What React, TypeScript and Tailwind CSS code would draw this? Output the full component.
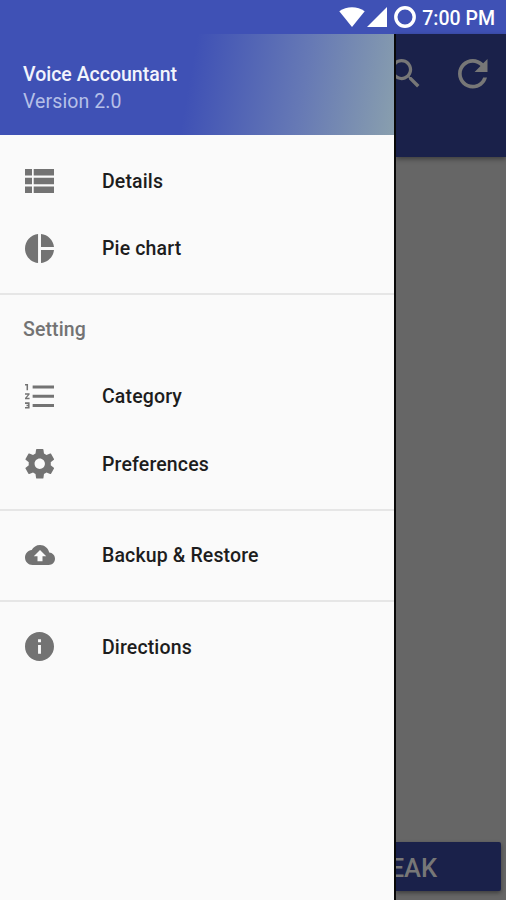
import type { ReactNode } from "react";

function Glyph({ d, viewBox, className }: { d: string; viewBox: string; className: string }) {
  return (
    <svg viewBox={viewBox} className={className} fill="currentColor" aria-hidden="true">
      <path d={d} />
    </svg>
  );
}

function Item({ icon, children }: { icon: ReactNode; children: ReactNode }) {
  return (
    <a className="flex h-[67.5px] shrink-0 items-center pl-[24.5px] text-[#737373]">
      <span className="flex w-[30px] shrink-0 justify-center">{icon}</span>
      <span className="mt-[1.5px] ml-[47.5px] text-[19.5px] leading-none font-medium tracking-[0.14px] text-[#1d1d1d]">{children}</span>
    </a>
  );
}

function Divider({ className }: { className: string }) {
  return <div className={`h-[2px] shrink-0 bg-[#e6e6e6] ${className}`} />;
}

function StatusBar() {
  return (
    <div className="flex h-[34px] shrink-0 items-center justify-end bg-[#3f51b5] pr-[11px] text-white">
      <Glyph viewBox="0 0 26 20" className="mr-[2px] h-5 w-[26px]" d="M13 20 L0.3 4.2 C7.5-1.2 18.5-1.2 25.7 4.2Z" />
      <Glyph viewBox="0 0 20 20" className="mr-[7px] h-5 w-5" d="M20 0V20H0Z" />
      <svg viewBox="0 0 22 22" className="mr-[6px] size-[22px]" fill="none" stroke="currentColor" strokeWidth="3.4">
        <circle cx="11" cy="11" r="9.2" />
      </svg>
      <span className="mt-[4px] text-[19.5px] leading-none font-medium">7:00 PM</span>
    </div>
  );
}

export default function App() {
  return (
    <div className="flex h-[900px] w-[506px] flex-col overflow-hidden bg-[#666] font-['Roboto',sans-serif]">
      <StatusBar />
      <div className="flex min-h-0 flex-1">
        <nav className="z-10 flex w-[396px] shrink-0 flex-col border-r-2 border-[#080808] bg-[#fafafa]">
          <header className="flex h-[101px] shrink-0 flex-col bg-[linear-gradient(100deg,#3f51b5_0%,#3f51b5_48%,#6679b5_76%,#899fae_100%)] pl-[23px] pt-[27px]">
            <h1 className="text-[19.5px] leading-[27px] font-medium text-[#f2f4fc]">Voice Accountant</h1>
            <p className="text-[19.5px] leading-[27px] tracking-[0.1px] text-[#b6c0e8]">Version 2.0</p>
          </header>
          <div className="flex flex-col pt-[12px]">
            <Item icon={<Glyph viewBox="0 0 29 24" className="h-6 w-[29px]" d="M0 0h7v6.5H0zM8.7 0H29v6.5H8.7zM0 8.7h7v6.6H0zM8.7 8.7H29v6.6H8.7zM0 17.5h7V24H0zM8.7 17.5H29V24H8.7z" />}>Details</Item>
            <Item icon={<Glyph viewBox="2 2 20 20" className="size-[29px]" d="M11 2v20c-5.07-.5-9-4.79-9-10s3.93-9.5 9-10zm2.03 0v8.99H22c-.47-4.74-4.24-8.52-8.97-8.99zm0 11.01V22c4.74-.47 8.5-4.25 8.97-8.99h-8.97z" />}>Pie chart</Item>
            <Divider className="mt-[11px]" />
            <h2 className="flex h-[67.5px] items-center pt-[2px] pl-[23px] text-[19.5px] leading-none font-medium tracking-[0.1px] text-[#737373]">Setting</h2>
            <Item icon={<Glyph viewBox="2 4 19 16" className="h-[24.5px] w-[29px]" d="M2 17h2v.5H3v1h1v.5H2v1h3v-4H2v1zm1-9h1V4H2v1h1v3zm-1 3h1.8L2 13.1v.9h3v-1H3.2L5 10.9V10H2v1zm5-6v2h14V5H7zm0 14h14v-2H7v2zm0-6h14v-2H7v2z" />}>Category</Item>
            <Item icon={<Glyph viewBox="2 2 20 20" className="size-[29.5px]" d="M19.43 12.98c.04-.32.07-.64.07-.98s-.03-.66-.07-.98l2.11-1.65c.19-.15.24-.42.12-.64l-2-3.46c-.12-.22-.39-.3-.61-.22l-2.49 1c-.52-.4-1.08-.73-1.69-.98l-.38-2.65C14.46 2.18 14.25 2 14 2h-4c-.25 0-.46.18-.49.42l-.38 2.65c-.61.25-1.17.59-1.69.98l-2.49-1c-.23-.09-.49 0-.61.22l-2 3.46c-.13.22-.07.49.12.64l2.11 1.65c-.04.32-.07.65-.07.98s.03.66.07.98l-2.11 1.65c-.19.15-.24.42-.12.64l2 3.46c.12.22.39.3.61.22l2.49-1c.52.4 1.08.73 1.69.98l.38 2.65c.03.24.24.42.49.42h4c.25 0 .46-.18.49-.42l.38-2.65c.61-.25 1.17-.59 1.69-.98l2.49 1c.23.09.49 0 .61-.22l2-3.46c.12-.22.07-.49-.12-.64l-2.11-1.65zM12 15.5c-1.93 0-3.5-1.57-3.5-3.5s1.57-3.5 3.5-3.5 3.5 1.57 3.5 3.5-1.57 3.5-3.5 3.5z" />}>Preferences</Item>
            <Divider className="my-[11px]" />
            <Item icon={<Glyph viewBox="0 4 24 16" className="h-5 w-[30px]" d="M19.35 10.04C18.67 6.59 15.64 4 12 4 9.11 4 6.6 5.64 5.35 8.04 2.34 8.36 0 10.91 0 14c0 3.31 2.69 6 6 6h13c2.76 0 5-2.24 5-5 0-2.64-2.05-4.78-4.65-4.96zM14 13v4h-4v-4H7l5-5 5 5h-3z" />}>Backup &amp; Restore</Item>
            <Divider className="my-[11px]" />
            <Item icon={<Glyph viewBox="2 2 20 20" className="size-[29px]" d="M12 2C6.48 2 2 6.48 2 12s4.48 10 10 10 10-4.48 10-10S17.52 2 12 2zm1 15h-2v-6h2v6zm0-8h-2V7h2v2z" />}>Directions</Item>
          </div>
        </nav>
        <main className="flex min-w-0 flex-1 flex-col">
          <div className="flex h-[123px] shrink-0 items-start bg-[#1a214a] pt-[22px] text-[#777] shadow-[0_2px_5px_#0006]">
            <Glyph viewBox="3 3 17.5 17.5" className="mt-[3px] -ml-[5px] size-[28.5px] shrink-0" d="M15.5 14h-.79l-.28-.27C15.41 12.59 16 11.11 16 9.5 16 5.91 13.09 3 9.5 3S3 5.91 3 9.5 5.91 16 9.5 16c1.61 0 3.09-.59 4.23-1.57l.27.28v.79l5 4.99L20.49 19l-4.99-5zm-6 0C7.01 14 5 11.99 5 9.5S7.01 5 9.5 5 14 7.01 14 9.5 11.99 14 9.5 14z" />
            <Glyph viewBox="4 4 16 16" className="mt-[3px] ml-[38.5px] size-[29.5px] shrink-0" d="M17.65 6.35C16.2 4.9 14.21 4 12 4c-4.42 0-7.99 3.58-7.99 8s3.57 8 7.99 8c3.73 0 6.84-2.55 7.73-6h-2.08c-.82 2.33-3.04 4-5.65 4-3.31 0-6-2.69-6-6s2.69-6 6-6c1.66 0 3.14.69 4.22 1.78L13 11h7V4l-2.35 2.35z" />
          </div>
          <div className="mt-auto mr-[5px] mb-[9px] flex h-[49px] items-center rounded-r-[2px] bg-[#1a214a] shadow-[0_2px_4px_#0006]">
            <span className="-ml-[38px] mt-[5px] text-[25.5px] leading-none font-medium text-[#777]">SPEAK</span>
          </div>
        </main>
      </div>
    </div>
  );
}
